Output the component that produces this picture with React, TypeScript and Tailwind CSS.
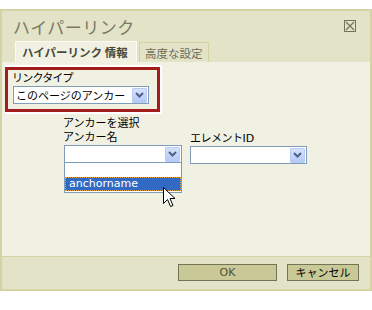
import React from "react";

const jp = { fontFamily: '"Noto Sans CJK JP", "Noto Sans", sans-serif' };
const jpTight = { fontFamily: '"DejaVu Sans", "Noto Sans CJK JP", sans-serif' };

function DropBtn() {
  return (
    <div className="w-[15px] h-[15px] bg-gradient-to-b from-[#d6e2fc] to-[#b5c9f7] border border-[#b9cbf3] rounded-[1px] flex items-center justify-center">
      <svg width="9" height="6" viewBox="0 0 9 6">
        <path d="M1 1 L4.5 4.5 L8 1" stroke="#4d6185" strokeWidth="2" fill="none" />
      </svg>
    </div>
  );
}

function Select({ w, text }: { w: number; text?: string }) {
  return (
    <div
      className="h-[18px] border border-[#7f9db9] bg-white flex items-center justify-between pl-[2px] pr-[1px]"
      style={{ width: w }}
    >
      <span className="text-[11px] leading-[13px] text-black whitespace-nowrap" style={jp}>
        {text}
      </span>
      <DropBtn />
    </div>
  );
}

export default function App() {
  return (
    <div className="w-[372px] h-[310px] bg-white pt-[9px] relative" style={jp}>
      <div className="h-[282px] border-2 border-[#d3d3a3] bg-[#e3e3c7] flex flex-col">
        {/* header */}
        <div className="h-[30px] flex items-start justify-between pl-[11px] pr-[14px]">
          <div className="text-[17px] leading-[20px] mt-[6px] text-[#7a7a66] tracking-[0.5px]">ハイパーリンク</div>
          <div className="mt-[9px] w-[12px] h-[12px] border border-[#737357] flex items-center justify-center">
            <svg width="10" height="10" viewBox="0 0 10 10">
              <path d="M1 1 L9 9 M9 1 L1 9" stroke="#737357" strokeWidth="1.2" />
            </svg>
          </div>
        </div>
        {/* tabs */}
        <div className="h-[21px] flex items-end pl-[13px] gap-[2px]">
          <div className="h-[21px] w-[122px] bg-[#f1f1e3] border-t border-l border-r border-[#fbfbf4] flex items-center pl-[6px]">
            <span className="text-[11.5px] leading-[14px] font-bold text-[#4a4a3a] whitespace-nowrap">ハイパーリンク 情報</span>
          </div>
          <div className="h-[20px] w-[70px] bg-[#e3e3c7] border-t border-l border-r border-[#d3d3a3] flex items-center pl-[5px]">
            <span className="text-[11.5px] leading-[14px] text-[#6d6d5a] whitespace-nowrap">高度な設定</span>
          </div>
        </div>
        {/* content */}
        <div className="flex-1 bg-[#f1f1e3] relative">
          <div className="mt-[3px] ml-[3px] w-[157px] pt-[2px] pr-[2px] pb-[2px] bg-white">
            <div className="border-[3px] border-[#a31d1d] bg-[#f1f1e3] h-[45px] pl-[4px] pt-[1px]">
              <div className="text-[11px] leading-[13px] text-black tracking-[-0.8px]">リンクタイプ</div>
              <div className="mt-[2px] ml-[1px]">
                <Select w={136} text="このページのアンカー" />
              </div>
            </div>
          </div>
          <div className="ml-[61px] mt-[3px] flex items-end gap-[8px]">
            <div className="w-[119px]">
              <div className="text-[11px] leading-[14px] text-black" style={jpTight}>
                アンカーを選択
              </div>
              <div className="text-[11px] leading-[14px] text-black" style={jpTight}>
                アンカー名
              </div>
              <div className="ml-[1px]">
                <Select w={118} />
              </div>
            </div>
            <div className="w-[117px] translate-y-[1px]">
              <div className="text-[11px] leading-[14px] text-black tracking-[-0.5px]">
                エレメント<span style={{ fontFamily: '"DejaVu Sans", sans-serif' }} className="tracking-normal">ID</span>
              </div>
              <Select w={117} />
            </div>
          </div>
          {/* dropdown list overlay */}
          <div className="absolute left-[62px] top-[101px] w-[118px] h-[30px] border border-[#7f9db9] border-t-0 bg-white">
            <div className="h-[14px]" />
            <div className="h-[14px] bg-[#316ac5] border border-dotted border-[#e8a33a] flex items-center pl-[3px]">
              <span className="text-[11px] leading-[12px] text-white" style={{ fontFamily: '"DejaVu Sans", sans-serif' }}>
                anchorname
              </span>
            </div>
          </div>
          {/* cursor */}
          <svg className="absolute left-[161px] top-[125px]" width="13" height="21" viewBox="0 0 13 21">
            <path
              d="M0.5 0.5 L0.5 16.5 L4.5 12.5 L7.5 19.5 L10 18.5 L7 11.5 L12 11.5 Z"
              fill="white"
              stroke="black"
              strokeWidth="1"
              strokeLinejoin="miter"
            />
          </svg>
        </div>
        {/* footer */}
        <div className="h-[33px] border-t border-[#d3d3a3] flex items-center justify-end gap-[10px] pr-[11px] pb-[1px]">
          <button className="w-[99px] h-[17px] bg-[#c9c897] border border-[#737357] flex items-center justify-center">
            <span className="text-[11px] leading-[13px] text-[#505040]" style={{ fontFamily: '"DejaVu Sans", sans-serif' }}>
              OK
            </span>
          </button>
          <button className="w-[72px] h-[17px] bg-[#c9c897] border border-[#737357] flex items-center justify-center">
            <span className="text-[11px] leading-[13px] text-black">キャンセル</span>
          </button>
        </div>
      </div>
    </div>
  );
}
